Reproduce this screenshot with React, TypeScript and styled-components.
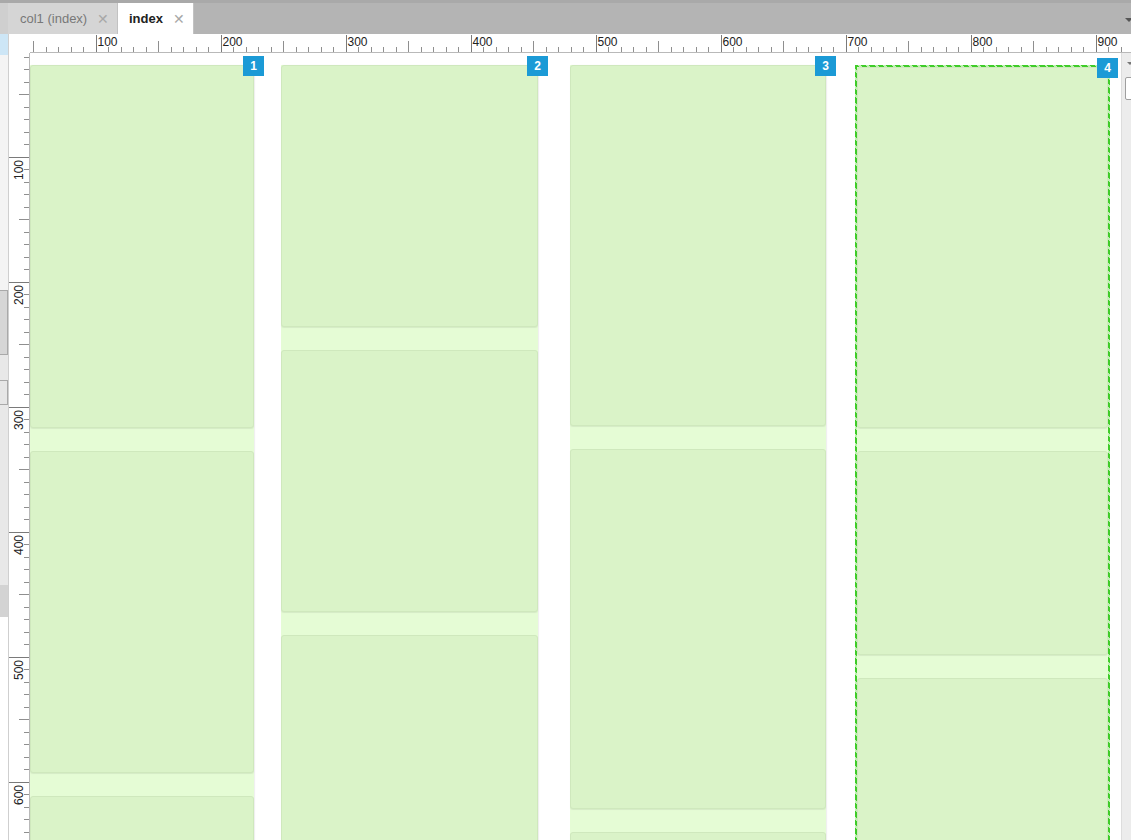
import styled, {createGlobalStyle} from "styled-components";

const GlobalStyle = createGlobalStyle`
  html, body {
    margin: 0;
    padding: 0;
    background: #ffffff;
    font-family: "Liberation Sans", Arial, sans-serif;
    overflow: hidden;
  }
`;

const Page = styled.div`
  width: 1131px;
  height: 840px;
  display: flex;
  flex-direction: column;
  overflow: hidden;
`;

const TabBar = styled.div`
  height: 34px;
  display: flex;
  align-items: flex-end;
  background: #b4b4b4;
  border-top: 3px solid #a9a9a9;
  box-sizing: border-box;
  position: relative;
  flex-shrink: 0;
`;

const TabGutter = styled.div`
  width: 8px;
  height: 100%;
  background: #cfcfcf;
`;

const Tab = styled.div<{ $active?: boolean }>`
  height: 31px;
  display: flex;
  align-items: center;
  gap: 10px;
  padding: 0 10px 0 ${(p) => (p.$active ? "11px" : "12px")};
  box-sizing: border-box;
  width: ${(p) => (p.$active ? "76px" : "110px")};
  background: ${(p) => (p.$active ? "#ffffff" : "#d5d5d5")};
  border-right: 1px solid #c2c2c2;
  font-size: 13px;
  font-weight: ${(p) => (p.$active ? "bold" : "normal")};
  color: ${(p) => (p.$active ? "#222222" : "#787878")};
`;

const TabLabel = styled.span`
  flex: 1;
  white-space: nowrap;
`;

const Close = styled.span`
  color: #a8a8a8;
  font-size: 14px;
  font-weight: normal;
`;

const MenuCaret = styled.div`
  position: absolute;
  right: -2px;
  top: 15px;
  width: 0;
  height: 0;
  border-left: 4px solid transparent;
  border-right: 4px solid transparent;
  border-top: 4px solid #555;
`;

const Main = styled.div`
  flex: 1;
  display: flex;
  min-height: 0;
`;

const SideStrip = styled.div`
  width: 8px;
  border-right: 1px solid #cfcfcf;
  display: flex;
  flex-direction: column;
  background: #f3f3f3;
  flex-shrink: 0;
`;

const StripPiece = styled.div<{ $h: number; $bg: string; $outline?: boolean }>`
  height: ${(p) => p.$h}px;
  background: ${(p) => p.$bg};
  box-sizing: border-box;
  border: ${(p) => (p.$outline ? "1px solid #a9a9a9" : "none")};
  border-left: none;
  flex-shrink: 0;
`;

const StripFill = styled.div`
  flex: 1;
  background: #ffffff;
`;

const Editor = styled.div`
  flex: 1;
  display: grid;
  grid-template-columns: 21px 1fr;
  grid-template-rows: 19px 1fr;
  min-width: 0;
`;

const Corner = styled.div`
  background: #ffffff;
`;

const TopRuler = styled.div`
  border-bottom: 1px solid #b9b9b9;
  background: #ffffff;
  overflow: hidden;
`;

const LeftRuler = styled.div`
  border-right: 1px solid #b9b9b9;
  background: #ffffff;
  overflow: hidden;
`;

const Workspace = styled.div`
  display: flex;
  min-height: 0;
  overflow: hidden;
`;

const Canvas = styled.div`
  flex: 1;
  display: flex;
  align-items: flex-start;
  padding-top: 12px;
  overflow: hidden;
  background: #ffffff;
`;

const Column = styled.div<{ $w: number; $ml: number; $selected?: boolean }>`
  position: relative;
  width: ${(p) => p.$w}px;
  margin-left: ${(p) => p.$ml}px;
  flex-shrink: 0;
  box-sizing: border-box;
  display: flex;
  flex-direction: column;
  gap: 23px;
  background: #e5fcd5;
  box-shadow: ${(p) => (p.$selected ? "none" : "1px 0 1px rgba(0, 0, 0, 0.06)")};
  ${(p) =>
    p.$selected &&
    `
    border: 2px solid transparent;
    border-bottom: none;
    border-image: repeating-linear-gradient(45deg, #3fcc29 0 4px, #bff0b2 4px 6px) 2;
  `}
`;

const Card = styled.div<{ $h: number }>`
  height: ${(p) => p.$h}px;
  flex-shrink: 0;
  box-sizing: border-box;
  background: #daf3c8;
  border: 1px solid #cfe8bd;
  border-radius: 3px;
  box-shadow: 0 1px 1px rgba(0, 0, 0, 0.07);
`;

const Badge = styled.div`
  position: absolute;
  top: -9px;
  right: -10px;
  width: 21px;
  height: 20px;
  background: #1b9ad6;
  color: #ffffff;
  font-size: 12px;
  font-weight: bold;
  display: flex;
  align-items: center;
  justify-content: center;
  z-index: 2;
`;

const RightStrip = styled.div`
  width: 9px;
  flex-shrink: 0;
  background: #ececec;
  border-left: 1px solid #dddddd;
  position: relative;
`;

const StripBox = styled.div`
  position: absolute;
  top: 24px;
  left: 3px;
  width: 10px;
  height: 21px;
  background: #ffffff;
  border: 1px solid #9f9f9f;
  border-radius: 2px;
`;

const StripMark = styled.div`
  position: absolute;
  top: 9px;
  left: 5px;
  width: 0;
  height: 0;
  border-left: 3px solid transparent;
  border-right: 3px solid transparent;
  border-top: 3px solid #777;
`;

interface ColumnData {
  id: number;
  width: number;
  offset: number;
  cards: number[];
  selected?: boolean;
}

const columns: ColumnData[] = [
  {id: 1, width: 224, offset: 0, cards: [363, 322, 400]},
  {id: 2, width: 257, offset: 27, cards: [262, 262, 400]},
  {id: 3, width: 256, offset: 32, cards: [361, 360, 400]},
  {id: 4, width: 255, offset: 29, cards: [361, 204, 400], selected: true},
];

// scale: 100 units = 125px
const HorizontalScale = () => {
  const ticks = [];
  for (let v = 50; v <= 930; v += 10) {
    const x = 66 + (v - 100) * 1.25;
    const major = v % 100 === 0;
    const mid = v % 50 === 0;
    const y1 = major ? 1 : mid ? 7 : 13;
    ticks.push(<line key={v} x1={x} x2={x} y1={y1} y2={18} stroke={major ? "#7a7a7a" : "#8f8f8f"} strokeWidth={1} />);
    if (major) {
      ticks.push(
        <text key={`t${v}`} x={x + 1.5} y={12} fontSize={12} fill="#222" fontFamily="Liberation Sans, Arial, sans-serif">
          {v}
        </text>
      );
    }
  }
  return (
    <svg width="1101" height="18" style={{display: "block"}} shapeRendering="crispEdges">
      {ticks}
    </svg>
  );
};

const VerticalScale = () => {
  const ticks = [];
  for (let v = 20; v <= 660; v += 10) {
    const y = 104 + (v - 100) * 1.25;
    const major = v % 100 === 0;
    const mid = v % 50 === 0;
    const x1 = major ? 0 : mid ? 10 : 15;
    ticks.push(<line key={v} x1={x1} x2={20} y1={y} y2={y} stroke={major ? "#7a7a7a" : "#8f8f8f"} strokeWidth={1} />);
    if (major) {
      ticks.push(
        <text
          key={`t${v}`}
          transform={`translate(14 ${y + 3}) rotate(-90)`}
          textAnchor="end"
          fontSize={12}
          fill="#222"
          fontFamily="Liberation Sans, Arial, sans-serif"
        >
          {v}
        </text>
      );
    }
  }
  return (
    <svg width="20" height="787" style={{display: "block"}} shapeRendering="crispEdges">
      {ticks}
    </svg>
  );
};

const App = () => {
  return (
    <Page>
      <GlobalStyle />
      <TabBar>
        <TabGutter />
        <Tab>
          <TabLabel>col1 (index)</TabLabel>
          <Close>✕</Close>
        </Tab>
        <Tab $active>
          <TabLabel>index</TabLabel>
          <Close>✕</Close>
        </Tab>
        <MenuCaret />
      </TabBar>
      <Main>
        <SideStrip>
          <StripPiece $h={21} $bg="#cde6f6" />
          <StripPiece $h={235} $bg="#f4f4f4" />
          <StripPiece $h={65} $bg="#d6d6d6" $outline />
          <StripPiece $h={25} $bg="#e8e8e8" />
          <StripPiece $h={25} $bg="#e6e6e6" $outline />
          <StripPiece $h={180} $bg="#e8e8e8" />
          <StripPiece $h={32} $bg="#d3d3d3" />
          <StripFill />
        </SideStrip>
        <Editor>
          <Corner />
          <TopRuler>
            <HorizontalScale />
          </TopRuler>
          <LeftRuler>
            <VerticalScale />
          </LeftRuler>
          <Workspace>
            <Canvas>
              {columns.map((col) => (
                <Column key={col.id} $w={col.width} $ml={col.offset} $selected={col.selected}>
                  <Badge>{col.id}</Badge>
                  {col.cards.map((h, i) => (
                    <Card key={i} $h={h} />
                  ))}
                </Column>
              ))}
            </Canvas>
            <RightStrip>
              <StripMark />
              <StripBox />
            </RightStrip>
          </Workspace>
        </Editor>
      </Main>
    </Page>
  );
};

export default App;
